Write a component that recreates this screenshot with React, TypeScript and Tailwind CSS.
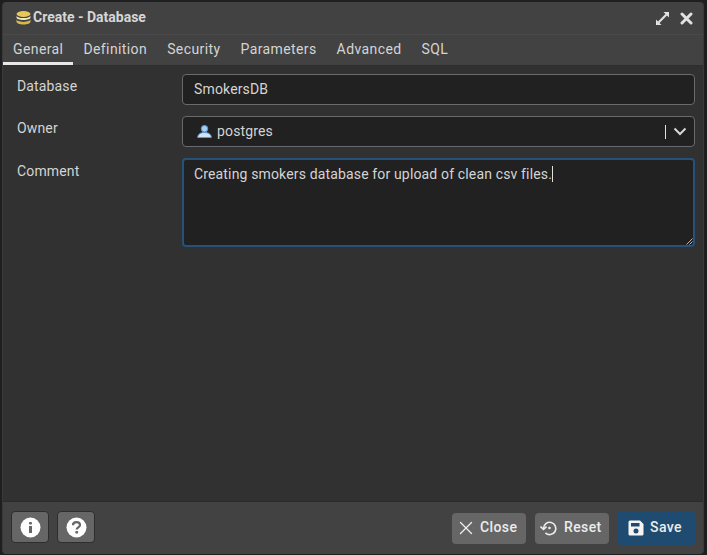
import React from "react";
import { X } from "lucide-react";

const tabs = ["General", "Definition", "Security", "Parameters", "Advanced", "SQL"];

function Row({ label, children, h, labelPad }: { label: string; children: React.ReactNode; h: string; labelPad: string }) {
  return (
    <div className={`flex ${h}`}>
      <div className={`w-[179px] pl-[14px] ${labelPad} shrink-0 text-[14px] leading-[20px] tracking-[0.15px] text-[#d4d4d4]`}>{label}</div>
      <div className="flex-1 min-w-0">{children}</div>
    </div>
  );
}

export default function App() {
  return (
    <div className="w-[707px] h-[555px] bg-[#1f1f1f] p-[2px] pb-[1px] pr-[3px] font-['Roboto',sans-serif] overflow-hidden">
      <div className="w-full h-full flex flex-col bg-[#313131] rounded-[4px] overflow-hidden border-l border-r border-[#3a3a3a]">
        <div className="h-[33px] shrink-0 bg-[#424242] border-b border-[#4a4a4a] flex items-center pl-[13px] pr-[10px]">
          <svg width="15" height="14" viewBox="0 0 15 14" className="mr-[2px]">
            <ellipse cx="7.5" cy="3" rx="7" ry="2.900" fill="#e8c75a" />
            <path d="M0.500 4.200c0 1.800 3 2.900 7 2.900s7-1.100 7-2.900v2c0 1.700-3 2.800-7 2.800s-7-1.100-7-2.800z" fill="#f2e8bc" />
            <path d="M0.500 8.100c0 1.700 3 2.800 7 2.800s7-1.100 7-2.800v2.700c0 1.500-3 2.700-7 2.700s-7-1.200-7-2.700z" fill="#d9b84a" />
          </svg>
          <span className="text-[14px] font-bold text-[#d6d6d6] leading-none pb-[2px]">Create - Database</span>
          <div className="flex-1" />
          <svg width="15" height="15" viewBox="0 0 15 15" className="mr-[10px]">
            <path d="M3.500 11.500 11.500 3.500" stroke="#e2e2e2" strokeWidth="2.200" />
            <path d="M8.500 1h5.500v5.500z" fill="#e2e2e2" />
            <path d="M6.500 14H1V8.500z" fill="#e2e2e2" />
          </svg>
          <svg width="13" height="13" viewBox="0 0 13 13">
            <path d="M2 2 11 11M11 2 2 11" stroke="#e2e2e2" strokeWidth="3" strokeLinecap="round" />
          </svg>
        </div>
        <div className="h-[31px] shrink-0 bg-[#424242] border-b border-[#2e2e2e] flex">
          {tabs.map((t, i) => (
            <div
              key={t}
              className={`h-[30px] px-[10px] flex items-center text-[14px] tracking-[0.4px] text-[#d4d4d4] ${i === 0 ? "border-b-[3px] border-[#e8e8e8] pt-[1px]" : "pb-[2px]"}`}
            >
              {t}
            </div>
          ))}
        </div>
        <div className="flex-1 min-h-0 flex flex-col pt-[8px] pr-[8px]">
          <Row label="Database" h="h-[31px] mb-[11px]" labelPad="pt-[2px]">
            <div className="h-[31px] bg-[#212121] border border-[#6a6a6a] rounded-[4px] flex items-center px-[11px] text-[14px] tracking-[0.15px] text-[#d4d4d4]">
              SmokersDB
            </div>
          </Row>
          <Row label="Owner" h="h-[31px] mb-[11px]" labelPad="pt-[2px]">
            <div className="h-[31px] bg-[#212121] border border-[#6a6a6a] rounded-[4px] flex items-center pl-[14px] text-[14px] tracking-[0.15px] text-[#d4d4d4]">
              <svg width="15" height="13" viewBox="0 0 15 13" className="mr-[5px]">
                <circle cx="7.500" cy="3.700" r="3.200" fill="#a9cdf0" stroke="#5a97d6" strokeWidth="1" />
                <path d="M0.700 12.500c0-3 2.600-5 6.800-5s6.800 2 6.800 5z" fill="#cfe3f7" stroke="#5a97d6" strokeWidth="1" />
              </svg>
              <span>postgres</span>
              <div className="flex-1" />
              <div className="w-px h-[14px] bg-[#e0e0e0] mr-[7px]" />
              <svg width="14" height="9" viewBox="0 0 14 9" className="mr-[7px]">
                <path d="M1.500 1.500 7 7l5.500-5.500" fill="none" stroke="#d6d6d6" strokeWidth="2" />
              </svg>
            </div>
          </Row>
          <Row label="Comment" h="h-[89px]" labelPad="pt-[3px]">
            <div className="relative h-[89px] bg-[#212121] border-2 border-[#24527a] rounded-[4px] pl-[10px] pt-[4px] text-[14px] leading-[20px] tracking-[0.15px] text-[#d4d4d4]">
              <span>Creating smokers database for upload of clean csv files.</span>
              <span className="inline-block w-px h-[16px] bg-[#e0e0e0] align-[-3px]" />
              <svg width="8" height="8" viewBox="0 0 8 8" className="absolute right-0 bottom-0">
                <path d="M7.500 1.500 1.500 7.500M7.500 4.500 4.500 7.500" stroke="#b5b5b5" strokeWidth="1" />
              </svg>
            </div>
          </Row>
        </div>
        <div className="h-[53px] shrink-0 bg-[#424242] border-t border-[#2a2a2a] flex items-center pl-[8px] pr-[8px]">
          <button className="w-[38px] h-[32px] -mt-[2px] rounded-[4px] bg-[#666666] border border-[#2e2e2e] flex items-center justify-center mr-[8px]">
            <svg width="21" height="21" viewBox="0 0 21 21">
              <circle cx="10.500" cy="10.500" r="10" fill="#ffffff" />
              <rect x="9" y="9" width="3" height="7" fill="#666666" />
              <rect x="9" y="5" width="3" height="2.500" rx="1" fill="#666666" />
            </svg>
          </button>
          <button className="w-[38px] h-[32px] -mt-[2px] rounded-[4px] bg-[#666666] border border-[#2e2e2e] flex items-center justify-center">
            <svg width="21" height="21" viewBox="0 0 21 21">
              <circle cx="10.500" cy="10.500" r="10" fill="#ffffff" />
              <path d="M7 8.200c0-2 1.600-3 3.500-3s3.500 1 3.500 2.800c0 2.500-3.300 2.300-3.300 4.500" fill="none" stroke="#666666" strokeWidth="2.200" />
              <rect x="9.300" y="14" width="2.800" height="2.500" rx="0.800" fill="#666666" />
            </svg>
          </button>
          <div className="flex-1" />
          <button className="w-[74px] h-[31px] rounded-[4px] bg-[#666666] flex items-center pl-[3px] text-[14px] font-medium tracking-[0.4px] text-[#ececec] mr-[9px]">
            <X size={22} strokeWidth={1.5} className="mr-[3px]" />
            <span className="pb-[2px]">Close</span>
          </button>
          <button className="w-[74px] h-[31px] rounded-[4px] bg-[#666666] flex items-center pl-[5px] text-[14px] font-medium tracking-[0.4px] text-[#ececec] mr-[8px]">
            <svg width="18" height="18" viewBox="0 0 19 18" className="mr-[6px]" fill="none" stroke="#ececec" strokeWidth="1.700">
              <path d="M3.700 9.500a6.500 6.500 0 1 1 2 4.700" />
              <path d="M0.500 7.500 3.700 10.500 6.900 7.500" />
              <circle cx="10" cy="9" r="1.400" fill="#ececec" stroke="none" />
            </svg>
            <span className="pb-[2px]">Reset</span>
          </button>
          <button className="w-[78px] h-[34px] rounded-[4px] bg-[#1f4b70] flex items-center pl-[11px] text-[14px] font-medium tracking-[0.4px] text-[#ececec]">
            <svg width="16" height="16" viewBox="0 0 16 16" className="mr-[6px]">
              <path fillRule="evenodd" d="M2 0.500h10l3.500 3.500v10a1.500 1.500 0 0 1-1.500 1.500H2A1.500 1.500 0 0 1 0.500 14V2A1.500 1.500 0 0 1 2 0.500zM3 3v3.500h8.500V3zM8 8.500a2.500 2.500 0 1 0 0 5 2.500 2.500 0 0 0 0-5z" fill="#f5f5f5" />
            </svg>
            <span className="pb-[2px]">Save</span>
          </button>
        </div>
      </div>
    </div>
  );
}
